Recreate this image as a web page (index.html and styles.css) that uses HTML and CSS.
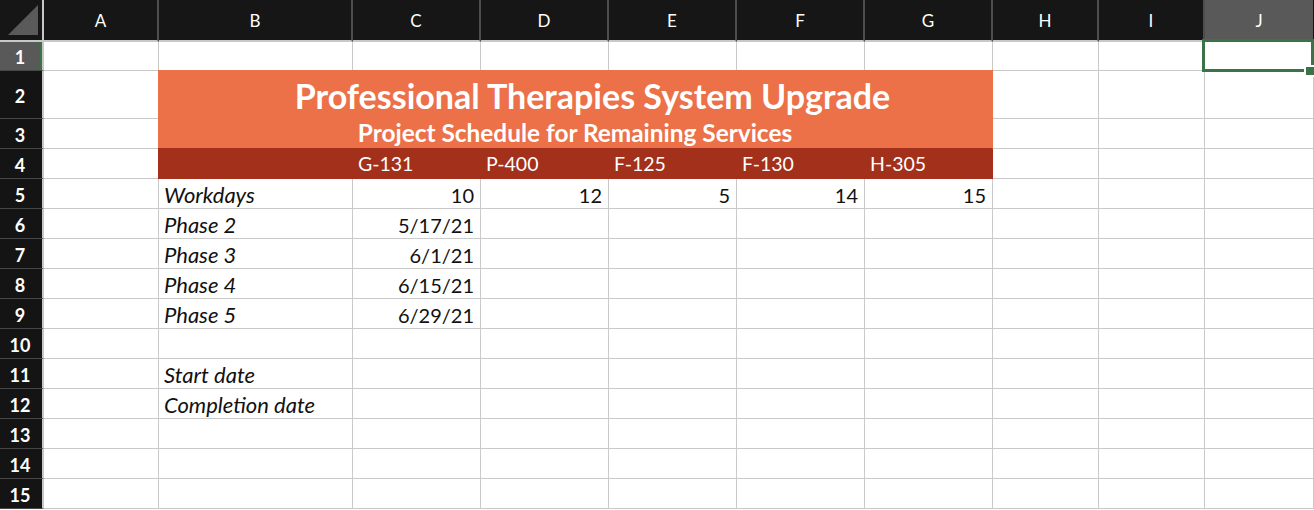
FILE: index.html
```html
<!DOCTYPE html>
<html lang="en">
<head>
<meta charset="utf-8">
<title>Project Schedule</title>
<link rel="stylesheet" href="styles.css">
</head>
<body>
<div class="sheet">
  <!-- header row -->
  <div class="corner"><svg class="corner-tri" width="44" height="42" viewBox="0 0 44 42"><polygon points="38,5 38,35 8,35" fill="#5a5a5a"/></svg></div>
  <div class="ch">A</div><div class="ch">B</div><div class="ch">C</div><div class="ch">D</div><div class="ch">E</div><div class="ch">F</div><div class="ch">G</div><div class="ch">H</div><div class="ch">I</div><div class="ch ch-sel">J</div>

  <!-- row 1 -->
  <div class="rh rh-sel">1</div>
  <div class="c"></div><div class="c"></div><div class="c"></div><div class="c"></div><div class="c"></div><div class="c"></div><div class="c"></div><div class="c"></div><div class="c"></div>
  <div class="c active"><div class="sel-box"></div><div class="sel-handle"></div></div>

  <!-- row 2 -->
  <div class="rh">2</div>
  <div class="c"></div>
  <div class="c title">Professional Therapies System Upgrade</div>
  <div class="c"></div><div class="c"></div><div class="c"></div>

  <!-- row 3 -->
  <div class="rh">3</div>
  <div class="c"></div>
  <div class="c sub">Project Schedule for Remaining Services</div>
  <div class="c"></div><div class="c"></div><div class="c"></div>

  <!-- row 4 -->
  <div class="rh">4</div>
  <div class="c"></div>
  <div class="c band band-first"></div>
  <div class="c band">G-131</div><div class="c band">P-400</div><div class="c band">F-125</div><div class="c band">F-130</div><div class="c band">H-305</div>
  <div class="c"></div><div class="c"></div><div class="c"></div>

  <!-- row 5 -->
  <div class="rh">5</div>
  <div class="c"></div>
  <div class="c lbl">Workdays</div>
  <div class="c num">10</div><div class="c num">12</div><div class="c num">5</div><div class="c num">14</div><div class="c num">15</div>
  <div class="c"></div><div class="c"></div><div class="c"></div>

  <!-- row 6 -->
  <div class="rh">6</div>
  <div class="c"></div>
  <div class="c lbl">Phase 2</div>
  <div class="c num">5/17/21</div><div class="c"></div><div class="c"></div><div class="c"></div><div class="c"></div>
  <div class="c"></div><div class="c"></div><div class="c"></div>

  <!-- row 7 -->
  <div class="rh">7</div>
  <div class="c"></div>
  <div class="c lbl">Phase 3</div>
  <div class="c num">6/1/21</div><div class="c"></div><div class="c"></div><div class="c"></div><div class="c"></div>
  <div class="c"></div><div class="c"></div><div class="c"></div>

  <!-- row 8 -->
  <div class="rh">8</div>
  <div class="c"></div>
  <div class="c lbl">Phase 4</div>
  <div class="c num">6/15/21</div><div class="c"></div><div class="c"></div><div class="c"></div><div class="c"></div>
  <div class="c"></div><div class="c"></div><div class="c"></div>

  <!-- row 9 -->
  <div class="rh">9</div>
  <div class="c"></div>
  <div class="c lbl">Phase 5</div>
  <div class="c num">6/29/21</div><div class="c"></div><div class="c"></div><div class="c"></div><div class="c"></div>
  <div class="c"></div><div class="c"></div><div class="c"></div>

  <!-- row 10 -->
  <div class="rh">10</div>
  <div class="c"></div><div class="c"></div><div class="c"></div><div class="c"></div><div class="c"></div><div class="c"></div><div class="c"></div><div class="c"></div><div class="c"></div><div class="c"></div>

  <!-- row 11 -->
  <div class="rh">11</div>
  <div class="c"></div>
  <div class="c lbl">Start date</div>
  <div class="c"></div><div class="c"></div><div class="c"></div><div class="c"></div><div class="c"></div><div class="c"></div><div class="c"></div><div class="c"></div>

  <!-- row 12 -->
  <div class="rh">12</div>
  <div class="c"></div>
  <div class="c lbl">Completion date</div>
  <div class="c"></div><div class="c"></div><div class="c"></div><div class="c"></div><div class="c"></div><div class="c"></div><div class="c"></div><div class="c"></div>

  <!-- row 13 -->
  <div class="rh">13</div>
  <div class="c"></div><div class="c"></div><div class="c"></div><div class="c"></div><div class="c"></div><div class="c"></div><div class="c"></div><div class="c"></div><div class="c"></div><div class="c"></div>

  <!-- row 14 -->
  <div class="rh">14</div>
  <div class="c"></div><div class="c"></div><div class="c"></div><div class="c"></div><div class="c"></div><div class="c"></div><div class="c"></div><div class="c"></div><div class="c"></div><div class="c"></div>

  <!-- row 15 -->
  <div class="rh">15</div>
  <div class="c"></div><div class="c"></div><div class="c"></div><div class="c"></div><div class="c"></div><div class="c"></div><div class="c"></div><div class="c"></div><div class="c"></div><div class="c"></div>
</div>
</body>
</html>
```

FILE: styles.css
```css
html, body {
  margin: 0;
  padding: 0;
  background: #ffffff;
  overflow: hidden;
}

.sheet {
  display: grid;
  grid-template-columns: 44px 115px 194px 128px 128px 128px 128px 128px 106px 106px 109px;
  grid-template-rows: 42px 29px 48px 30px 30px repeat(11, 30px);
  font-family: Lato, "Noto Sans", sans-serif;
  width: 1314px;
  height: 510px;
  background: #ffffff;
}

.sheet > div {
  box-sizing: border-box;
  min-width: 0;
}

/* corner */
.corner {
  background: #161616;
  border-right: 2px solid #c8c8c8;
  border-bottom: 2px solid #c8c8c8;
  position: relative;
}
.corner-tri {
  display: block;
}

/* column headers */
.ch {
  background: #161616;
  color: #ffffff;
  font-size: 17px;
  display: flex;
  align-items: center;
  justify-content: center;
  border-right: 2px solid #4e4e4e;
  border-bottom: 2px solid #c8c8c8;
  padding-top: 1px;
}
.ch-sel {
  background: #595959;
  border-right: 1px solid #161616;
}

/* row headers */
.rh {
  background: #141414;
  color: #ffffff;
  font-size: 18px;
  font-weight: 700;
  display: flex;
  align-items: center;
  justify-content: center;
  border-right: 2px solid #c8c8c8;
  border-bottom: 1px solid #474747;
  padding-right: 2px;
  padding-top: 2px;
}
.rh-sel {
  background: #595959;
  box-shadow: inset -2px 0 0 #3b7349;
}

/* cells */
.c {
  border-right: 1px solid #c9c9c9;
  border-bottom: 1px solid #c9c9c9;
  display: flex;
  align-items: flex-end;
  padding: 0 5px 2px 5px;
  font-size: 20px;
  line-height: 22px;
  color: #111111;
  white-space: nowrap;
}

.lbl {
  font-style: italic;
  font-size: 22px;
}

.num {
  justify-content: flex-end;
  padding-right: 6px;
}

/* title block */
.title {
  grid-column: span 6;
  background: #ec7048;
  border-right-color: #ec7048;
  border-bottom-color: #ec7048;
  margin-left: -1px;
  margin-top: -1px;
  color: #ffffff;
  font-weight: 700;
  font-size: 34px;
  line-height: 36px;
  justify-content: center;
  padding: 0 0 4px 35px;
}

.sub {
  grid-column: span 6;
  background: #ec7048;
  border-right-color: #ec7048;
  border-bottom-color: #a3301a;
  margin-left: -1px;
  color: #ffffff;
  font-weight: 700;
  font-size: 24.4px;
  line-height: 26px;
  justify-content: center;
  padding: 0 0 2px 0;
}

.band {
  background: #a3301a;
  border-right-color: #a3301a;
  border-bottom-color: #a3301a;
  color: #ffffff;
  font-size: 19.5px;
  padding-bottom: 3px;
}
.band-first {
  margin-left: -1px;
}

/* active cell selection */
.active {
  position: relative;
}
.sel-box {
  position: absolute;
  left: -3px;
  top: -3px;
  right: -1px;
  bottom: -2px;
  border: 3px solid #3b7349;
  box-sizing: border-box;
}
.sel-handle {
  position: absolute;
  left: 99px;
  top: 23px;
  width: 12px;
  height: 12px;
  background: #3b7349;
  border: 2px solid #ffffff;
  box-sizing: border-box;
}
```
